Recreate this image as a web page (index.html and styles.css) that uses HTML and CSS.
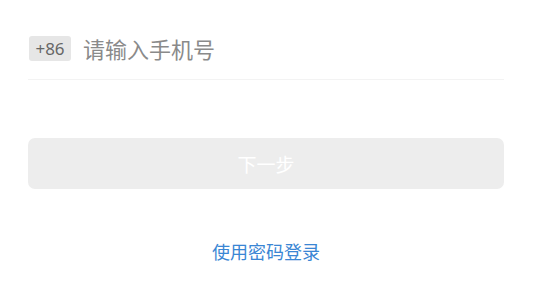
FILE: index.html
```html
<!DOCTYPE html>
<html lang="zh-CN">
<head>
    <meta charset="UTF-8">
    <meta name="viewport" content="width=device-width, initial-scale=1.0">
    <title>登录</title>
    <link rel="stylesheet" href="styles.css">
</head>
<body>

    <div class="login">
        <div class="phone-row">
            <span class="area-code">+86</span>
            <input class="phone-input" type="tel" placeholder="请输入手机号">
        </div>
        <button class="button-next" disabled>下一步</button>
        <a class="link-password" href="#">使用密码登录</a>
    </div>

</body>
</html>
```

FILE: styles.css
```css
body {
    font-family: 'Noto Sans CJK SC', 'Noto Sans', sans-serif;
    background-color: #fff;
    margin: 0;
}

.login {
    padding: 0 29px 0 28px;
    display: flex;
    flex-direction: column;
}

.phone-row {
    display: flex;
    align-items: center;
    padding: 36px 0 18px;
    border-bottom: 1px solid #f3f3f3;
}

.area-code {
    background-color: #e6e6e6;
    color: #666;
    font-family: 'Noto Sans', sans-serif;
    font-size: 17px;
    line-height: 25px;
    height: 25px;
    width: 42px;
    text-align: center;
    border-radius: 3px;
    margin-left: 1px;
}

.phone-input {
    border: none;
    outline: none;
    font-family: inherit;
    font-size: 22px;
    line-height: 25px;
    height: 25px;
    color: #333;
    margin-left: 12px;
    padding: 0;
    flex: 1;
    background: transparent;
}

.phone-input::placeholder {
    color: #8a8a8a;
}

.button-next {
    margin-top: 58px;
    height: 51px;
    border: none;
    border-radius: 7px;
    background-color: #ededed;
    color: #fff;
    font-family: inherit;
    font-size: 19px;
}

.link-password {
    align-self: center;
    margin-top: 49px;
    color: #3a86d4;
    font-size: 18px;
    text-decoration: none;
}
```
